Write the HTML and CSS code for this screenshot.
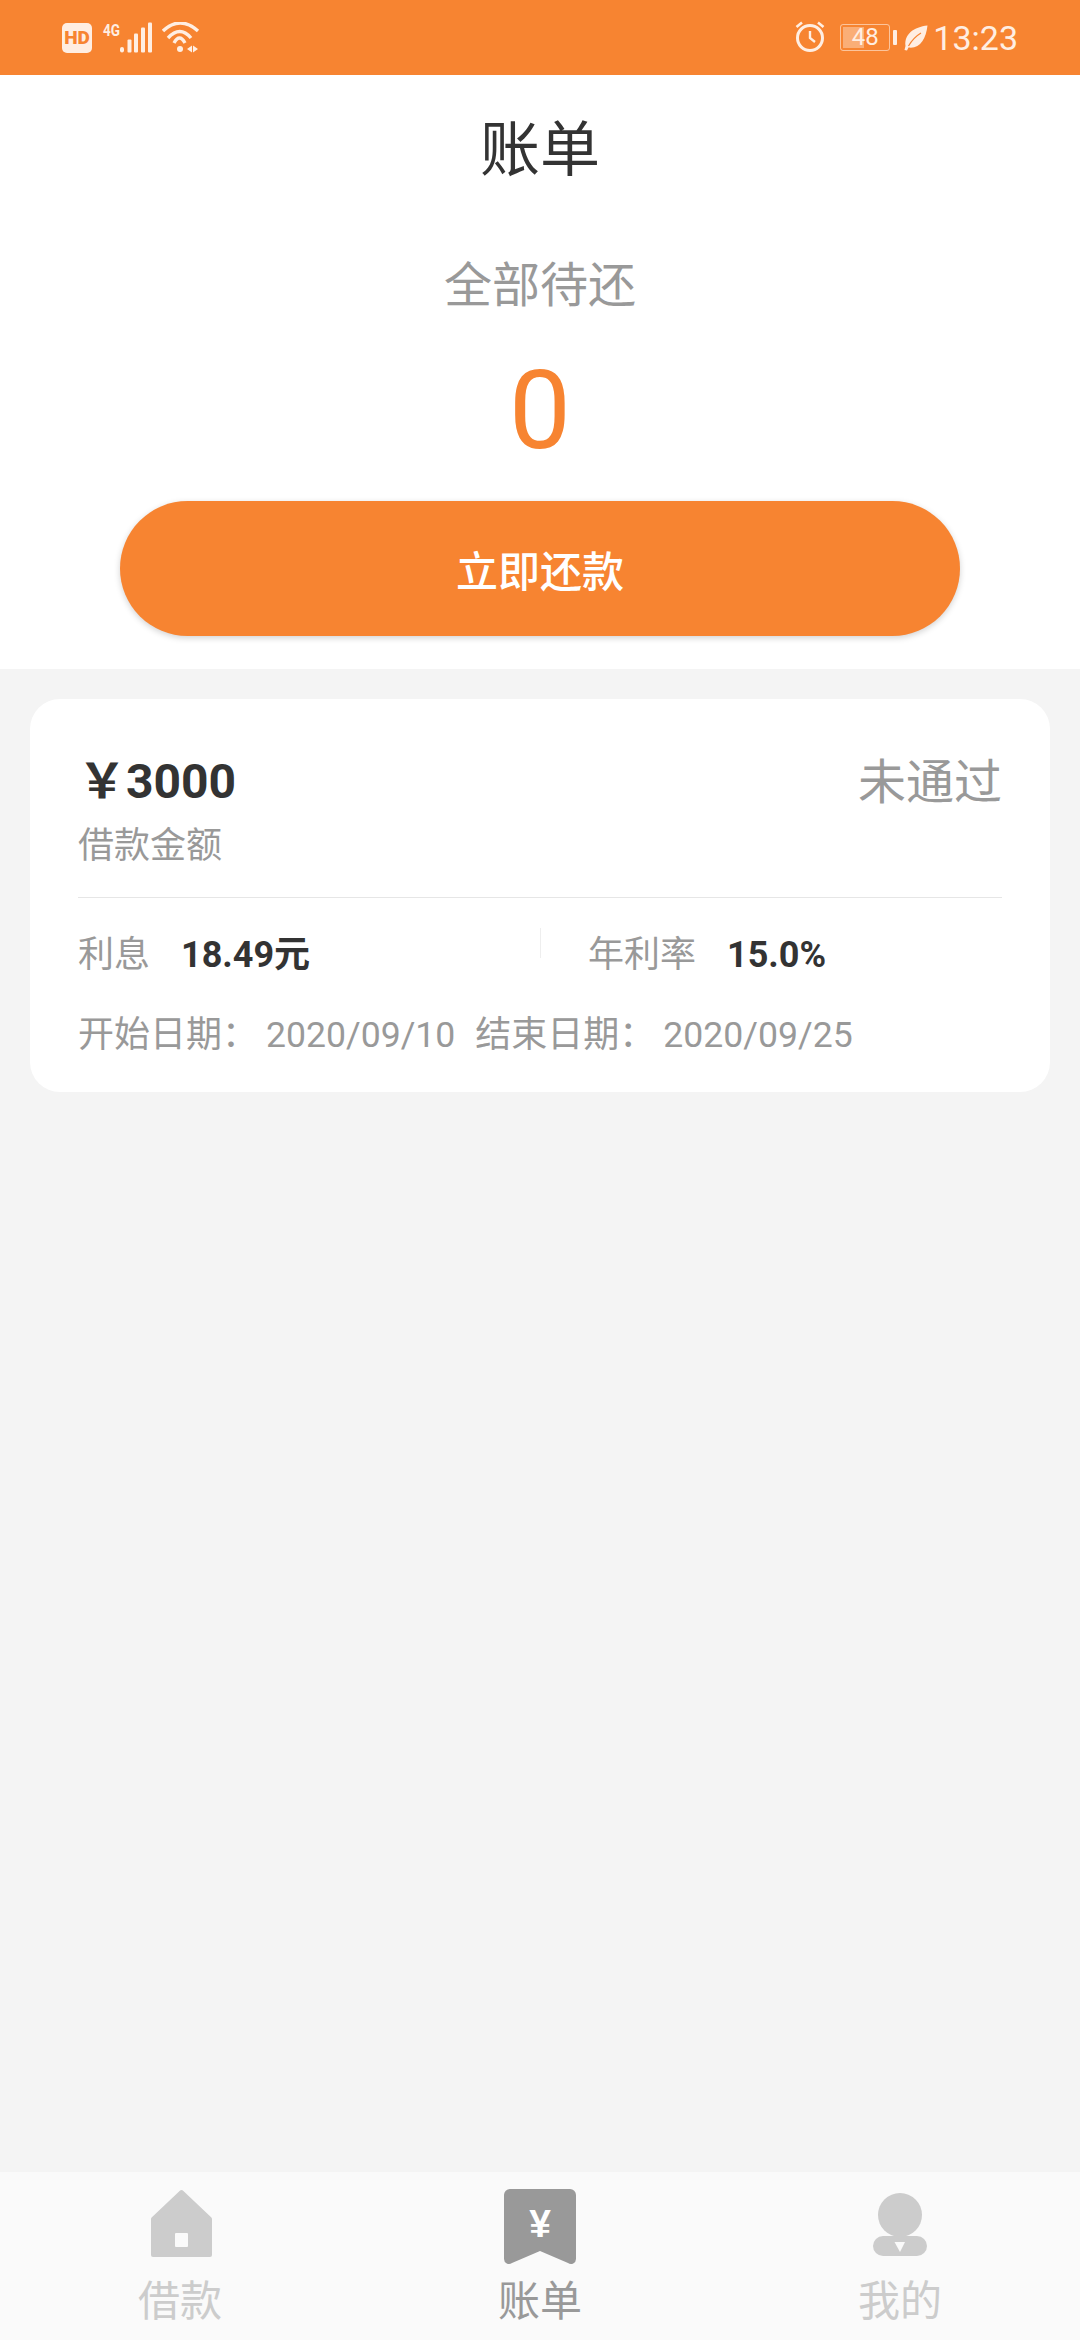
FILE: index.html
```html
<!DOCTYPE html>
<html lang="zh-CN">
<head>
    <meta charset="UTF-8">
    <meta name="viewport" content="width=device-width, initial-scale=1.0">
    <title>账单</title>
    <link rel="stylesheet" href="styles.css">
</head>
<body>
    <div class="status-bar">
        <div class="status-left">
            <span class="hd-badge">HD</span>
            <svg class="net-icon" width="54" height="40" viewBox="0 -4 54 40">
                <text x="1" y="13.500" class="net-text" textLength="17" lengthAdjust="spacingAndGlyphs">4G</text>
                <rect x="18" y="25" width="4" height="5.500" rx="2" />
                <rect x="25.500" y="17.500" width="4" height="13" rx="1" />
                <rect x="32" y="11.500" width="4" height="19" rx="1" />
                <rect x="39" y="5.500" width="4" height="25" rx="1" />
                <rect x="46" y="0.500" width="4" height="30" rx="1" />
            </svg>
            <svg class="wifi-icon" width="38" height="32" viewBox="0 0 38 32">
                <g fill="none" stroke="#ffeee2" stroke-width="3.400">
                    <path d="M1 9 Q18 -7 36 9" />
                    <path d="M6 16 Q18 3 29 16" />
                    <path d="M12 21 Q17.500 11 23 21" />
                </g>
                <circle cx="18" cy="27" r="3" fill="#ffeee2" />
                <path d="M25 27 L30 23.500 V30.500Z M31 23.500 L36 27 L31 30.500Z" fill="#ffeee2" />
            </svg>
        </div>
        <div class="status-right">
            <svg class="alarm-icon" width="32" height="32" viewBox="0 0 32 32">
                <circle cx="16" cy="18" r="12.500" fill="none" stroke="#ffeee2" stroke-width="3" />
                <path d="M16 11 V18 L21 22" fill="none" stroke="#ffeee2" stroke-width="2.400" />
                <path d="M2.500 7 L8 2.500 M29.500 7 L24 2.500" fill="none" stroke="#ffeee2" stroke-width="2.600" />
            </svg>
            <div class="battery">
                <div class="battery-body">
                    <div class="battery-fill" style="width: 48%"></div>
                    <span class="battery-num">48</span>
                </div>
                <div class="battery-nub"></div>
            </div>
            <svg class="leaf-icon" width="24" height="26" viewBox="0 0 24 26">
                <path d="M23.500 0.500 C10 2 0 9 1.500 21 L0.500 25 L3 25.500 L4.500 22.500 C16 24 22 14 23.500 0.500Z" fill="#ffeee2" />
                <path d="M4.500 21 C8 15 12 11 17 8" fill="none" stroke="#f78431" stroke-width="1.200" />
            </svg>
            <span class="clock">13:23</span>
        </div>
    </div>

    <div class="summary">
        <h1 class="page-title">账单</h1>
        <div class="due-label">全部待还</div>
        <div class="due-amount">0</div>
        <button class="repay-btn">立即还款</button>
    </div>

    <div class="content">
        <div class="bill-card">
            <div class="bill-head">
                <div>
                    <div class="bill-amount">&#xFFE5;3000</div>
                    <div class="bill-label">借款金额</div>
                </div>
                <div class="bill-state">未通过</div>
            </div>
            <div class="bill-info">
                <div class="info-cell info-left">
                    <span>利息</span>
                    <b>18.49元</b>
                </div>
                <div class="info-sep"></div>
                <div class="info-cell info-right">
                    <span>年利率</span>
                    <b>15.0%</b>
                </div>
            </div>
            <div class="bill-dates">
                <span>开始日期：</span>
                <span class="date-value">2020/09/10</span>
                <span class="date-end">结束日期：</span>
                <span class="date-value">2020/09/25</span>
            </div>
        </div>
    </div>

    <div class="tab-bar">
        <div class="tab">
            <svg width="80" height="80" viewBox="0 0 80 80">
                <path d="M41.500 6 L70 33 V69 H13 V33Z" fill="#cccccc" stroke="#cccccc" stroke-width="4" stroke-linejoin="round" />
                <rect x="35" y="47" width="13" height="14" rx="1" fill="#fafafa" />
            </svg>
            <span class="tab-label">借款</span>
        </div>
        <div class="tab tab-active">
            <svg width="80" height="80" viewBox="0 0 80 80">
                <path d="M10 3 H70 a6 6 0 0 1 6 6 V73 a5 5 0 0 1 -8 4 L40 65 L12 77 a5 5 0 0 1 -8 -4 V9 a6 6 0 0 1 6 -6Z" fill="#999999" />
                <text x="40" y="51" text-anchor="middle" class="yen-mark">¥</text>
            </svg>
            <span class="tab-label">账单</span>
        </div>
        <div class="tab">
            <svg width="80" height="80" viewBox="0 0 80 80">
                <circle cx="40" cy="29" r="22" fill="#cccccc" />
                <rect x="13" y="50" width="54" height="20" rx="10" fill="#cccccc" />
                <path d="M34.500 56 H45 L40 66Z" fill="#fafafa" />
            </svg>
            <span class="tab-label">我的</span>
        </div>
    </div>
</body>
</html>
```

FILE: styles.css
```css
* {
    box-sizing: border-box;
}
body {
    margin: 0;
    width: 1080px;
    height: 2340px;
    display: flex;
    flex-direction: column;
    font-family: Roboto, "Noto Sans CJK SC", sans-serif;
    background-color: #f4f4f4;
    color: #999999;
}

/* status bar */
.status-bar {
    height: 75px;
    flex: none;
    display: flex;
    justify-content: space-between;
    align-items: center;
    padding: 0 62px;
    background-color: #f78431;
    color: #ffeee2;
}
.status-left, .status-right {
    display: flex;
    align-items: center;
}
.hd-badge {
    width: 30px;
    height: 30px;
    border-radius: 5px;
    background-color: #ffeee2;
    color: #f78431;
    font-size: 19px;
    font-weight: 900;
    line-height: 30px;
    text-align: center;
}
.net-icon {
    margin-left: 10px;
    fill: #ffeee2;
}
.net-text {
    font-family: Roboto, sans-serif;
    font-size: 17px;
    font-weight: 700;
}
.wifi-icon {
    margin-left: 6px;
}
.alarm-icon {
    margin-top: -4px;
}
.battery {
    display: flex;
    align-items: center;
    margin-left: 14px;
}
.battery-body {
    position: relative;
    width: 50px;
    height: 27px;
    border: 1.5px solid rgba(255, 238, 226, 0.6);
    border-radius: 3px;
    padding: 2px;
}
.battery-fill {
    height: 100%;
    background-color: rgba(255, 238, 226, 0.4);
}
.battery-num {
    position: absolute;
    top: 0;
    left: 0;
    width: 100%;
    font-size: 24px;
    line-height: 24px;
    text-align: center;
}
.battery-nub {
    width: 4px;
    height: 15px;
    margin-left: 3px;
    border-radius: 1px;
    background-color: #ffeee2;
}
.leaf-icon {
    margin-left: 7px;
}
.clock {
    margin-left: 5px;
    font-size: 34px;
    line-height: 40px;
}

/* top summary */
.summary {
    flex: none;
    height: 594px;
    display: flex;
    flex-direction: column;
    align-items: center;
    background-color: #ffffff;
}
.page-title {
    margin: 0;
    height: 146px;
    font-size: 60px;
    font-weight: 400;
    line-height: 152px;
    color: #333333;
}
.due-label {
    margin-top: 35px;
    font-size: 48px;
    line-height: 60px;
}
.due-amount {
    margin-top: 35px;
    font-size: 110px;
    line-height: 120px;
    color: #f78431;
}
.repay-btn {
    width: 840px;
    height: 135px;
    margin-top: 30px;
    border: none;
    border-radius: 68px;
    background-color: #f78431;
    box-shadow: 0 2px 6px rgba(0, 0, 0, 0.18);
    color: #ffffff;
    font-family: inherit;
    font-size: 42px;
    font-weight: 500;
}

/* bill card */
.content {
    flex: 1;
    padding: 30px;
}
.bill-card {
    height: 393px;
    padding: 53px 48px 0;
    border-radius: 30px;
    background-color: #ffffff;
}
.bill-head {
    display: flex;
    justify-content: space-between;
    height: 146px;
    border-bottom: 1px solid #e6e6e6;
}
.bill-amount {
    font-size: 48px;
    font-weight: 700;
    line-height: 60px;
    color: #333333;
}
.bill-label {
    margin-top: 10px;
    font-size: 36px;
    line-height: 48px;
}
.bill-state {
    margin-top: -1px;
    font-size: 48px;
    line-height: 64px;
}
.bill-info {
    display: flex;
    margin-top: 30px;
    font-size: 36px;
    line-height: 50px;
}
.info-cell {
    display: flex;
    gap: 31px;
    padding-top: 2px;
}
.info-cell b {
    color: #333333;
}
.info-left {
    width: 462px;
}
.info-sep {
    width: 1px;
    height: 30px;
    background-color: #eeeeee;
}
.info-right {
    padding-left: 47px;
}
.bill-dates {
    display: flex;
    margin-top: 30px;
    font-size: 36px;
    line-height: 50px;
}
.date-value {
    margin-left: 8px;
    font-size: 35.6px;
}
.date-end {
    margin-left: 20px;
}

/* bottom tabs */
.tab-bar {
    flex: none;
    height: 168px;
    display: grid;
    grid-template-columns: repeat(3, 1fr);
    background-color: #fafafa;
}
.tab {
    display: flex;
    flex-direction: column;
    align-items: center;
    padding-top: 14px;
    color: #cccccc;
}
.tab-active {
    color: #999999;
}
.tab-label {
    margin-top: 11px;
    font-size: 42px;
    line-height: 50px;
}
.yen-mark {
    font-family: "Liberation Sans", sans-serif;
    font-size: 39px;
    font-weight: 700;
    fill: #ffffff;
}
```
